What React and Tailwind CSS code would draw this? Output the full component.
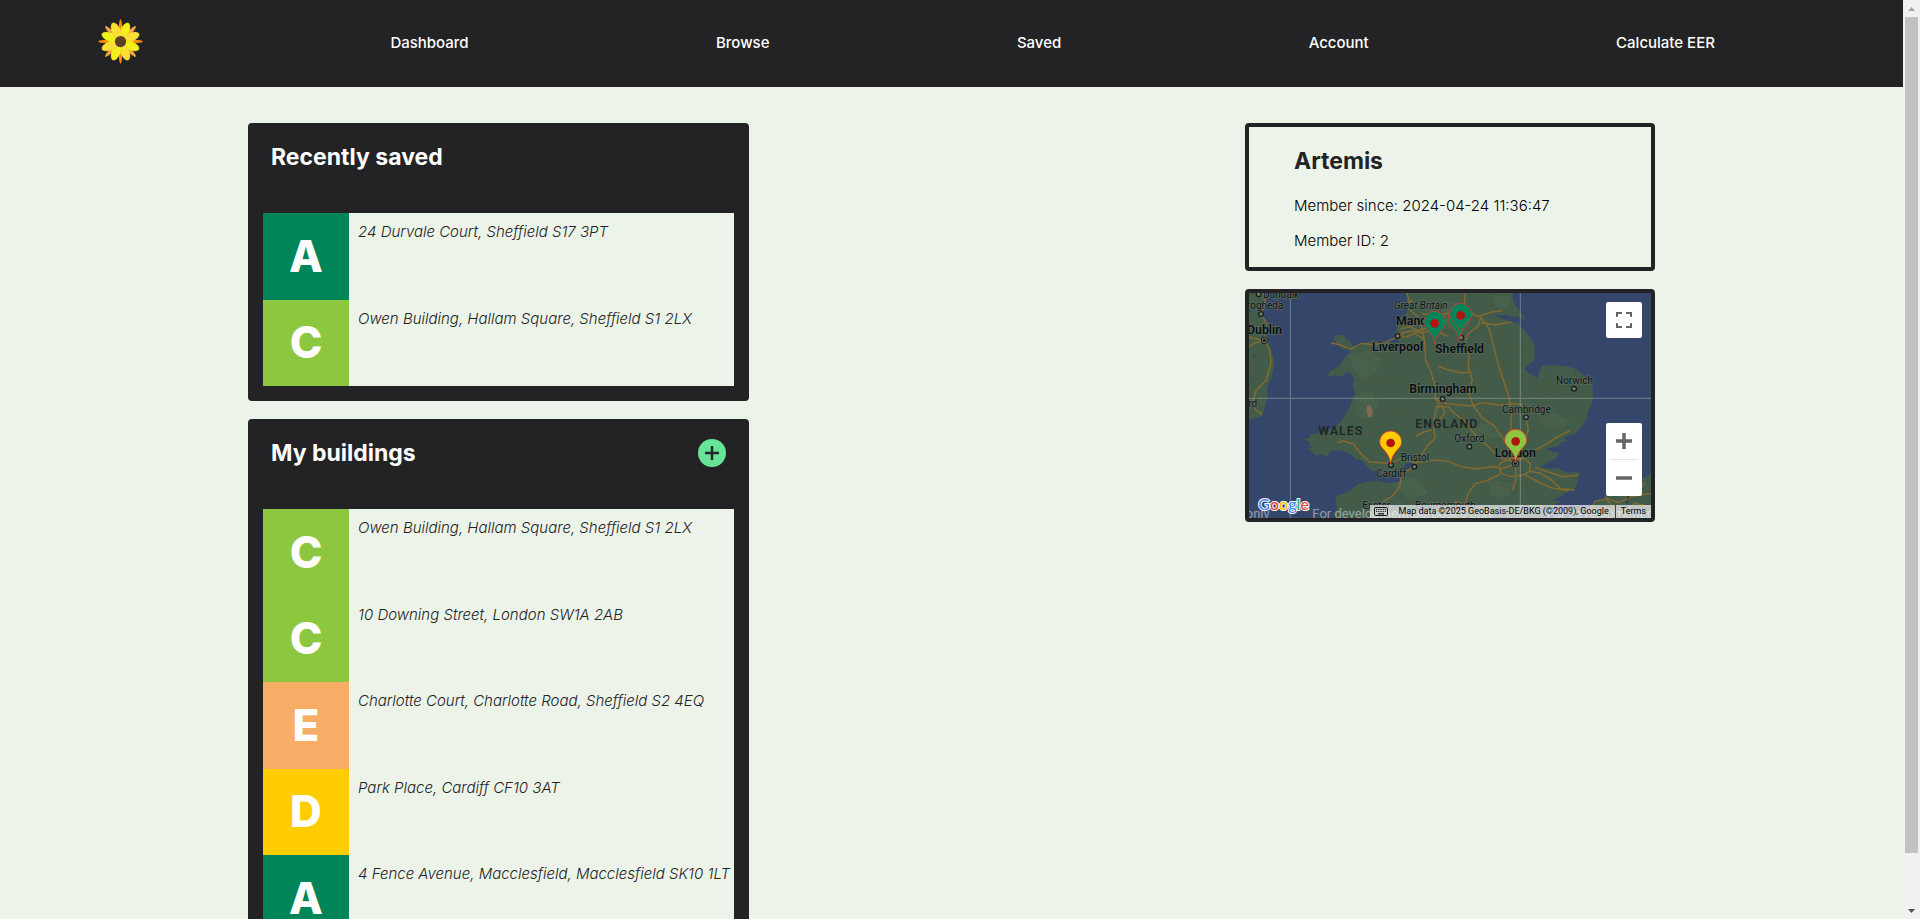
const NAV = ["Dashboard", "Browse", "Saved", "Account", "Calculate EER"];

const SAVED = [
  { rating: "A", address: "24 Durvale Court, Sheffield S17 3PT" },
  { rating: "C", address: "Owen Building, Hallam Square, Sheffield S1 2LX" },
];

const BUILDINGS = [
  { rating: "C", address: "Owen Building, Hallam Square, Sheffield S1 2LX" },
  { rating: "C", address: "10 Downing Street, London SW1A 2AB" },
  { rating: "E", address: "Charlotte Court, Charlotte Road, Sheffield S2 4EQ" },
  { rating: "D", address: "Park Place, Cardiff CF10 3AT" },
  { rating: "A", address: "4 Fence Avenue, Macclesfield, Macclesfield SK10 1LT" },
];

const RATING_COLOURS = {
  A: "bg-[#008558]",
  C: "bg-[#8dc740]",
  D: "bg-[#ffcc00]",
  E: "bg-[#f7ad65]",
};

function Flower() {
  return (
    <svg viewBox="54 37 136 136" className="size-[45px]" aria-hidden="true">
      {[0, 90, 180, 270].map((a) => (
        <ellipse key={a} cx="122" cy="65" rx="5" ry="27" fill="#fb8c00" transform={`rotate(${a} 122 105)`} />
      ))}
      {[45, 135, 225, 315].map((a) => (
        <ellipse key={a} cx="122" cy="67" rx="6" ry="27" fill="#fba540" transform={`rotate(${a} 122 105)`} />
      ))}
      {[22.5, 67.5, 112.5, 157.5, 202.5, 247.5, 292.5, 337.5].map((a, i) => (
        <ellipse
          key={a}
          cx="122"
          cy="73"
          rx="13.5"
          ry="29"
          fill={i % 2 ? "#fbdf35" : "#f0f01c"}
          stroke="#d9bf2a"
          strokeWidth="0.8"
          transform={`rotate(${a} 122 105)`}
        />
      ))}
      <circle cx="122" cy="105" r="17" fill="#5d4023" />
    </svg>
  );
}

function Header() {
  return (
    <header className="bg-[#232325] text-white">
      <nav className="flex h-[87px] items-center justify-between pr-[188px] pl-[98px]" aria-label="Main">
        <a href="#home" aria-label="Home" className="pb-1">
          <Flower />
        </a>
        {NAV.map((item) => (
          <a key={item} href="#" className="pb-px text-[15px] leading-6 font-medium">
            {item}
          </a>
        ))}
      </nav>
    </header>
  );
}

function BuildingPanel({ title, items, action }) {
  return (
    <section className="rounded bg-[#232325] px-[15px] pb-[15px]">
      <div className="flex h-[90px] items-start justify-between px-2 pt-5">
        <h2 className="text-[23px] leading-7 font-bold text-white">{title}</h2>
        {action}
      </div>
      <ul className="bg-[#ecf3e8]">
        {items.map(({ rating, address }) => (
          <li key={address} className="flex odd:h-[87px] even:h-[86px]">
            <span
              className={`flex w-[86px] shrink-0 items-center justify-center pb-0.5 text-[44px] font-extrabold text-white ${RATING_COLOURS[rating]}`}
            >
              {rating}
            </span>
            <p className="pt-2 pl-[9px] text-[15px] leading-[22px] font-light whitespace-nowrap text-[#232325] italic">
              {address}
            </p>
          </li>
        ))}
      </ul>
    </section>
  );
}

function AddButton() {
  return (
    <button type="button" aria-label="Add building" className="flex size-7 items-center justify-center rounded-full bg-[#66e598]">
      <svg viewBox="0 0 14 14" className="size-[14px]" aria-hidden="true">
        <path d="M7 0v14M0 7h14" stroke="#232325" strokeWidth="2.4" />
      </svg>
    </button>
  );
}

function Profile() {
  return (
    <section className="h-[148px] rounded border-4 border-[#232325] px-[45px] pt-[18px]">
      <h2 className="text-[23px] leading-8 font-bold text-[#232325]">Artemis</h2>
      <p className="mt-[18px] text-[15px] leading-[22px] font-light text-black">Member since: 2024-04-24 11:36:47</p>
      <p className="mt-[13px] text-[15px] leading-[22px] font-light text-black">Member ID: 2</p>
    </section>
  );
}

function Pin({ x, y, fill }) {
  return (
    <g transform={`translate(${x} ${y})`}>
      <path
        d="M0 0C-3 -22 -9 -30 -19 -42C-29 -53 -33 -58 -33 -67A33 33 0 0 1 33 -67C33 -58 29 -53 19 -42C9 -30 3 -22 0 0Z"
        fill={fill}
        stroke="#e03030"
        strokeWidth="2.5"
      />
      <circle cy="-64" r="13" fill="#b31412" />
    </g>
  );
}

const TOWNS = [
  [71, 43], [78, 102], [488, 168], [623, 357], [538, 560], [468, 555], [679, 173], [703, 500], [873, 412], [1017, 326],
];

const MAJOR_LABELS = [
  [36, 161, "Dublin"],
  [483, 135, "Manch"],
  [411, 213, "Liverpool"],
  [600, 219, "Sheffield"],
  [523, 340, "Birmingham"],
  [779, 531, "London"],
];

const MINOR_LABELS = [
  [84, 53, "Dundalk"],
  [16, 88, "Drogheda"],
  [497, 544, "Bristol"],
  [423, 590, "Cardiff"],
  [658, 487, "Oxford"],
  [801, 398, "Cambridge"],
  [963, 311, "Norwich"],
  [382, 686, "Exeter"],
  [540, 686, "Bournemouth"],
  [-45, 382, "Wexford"],
];

const GB =
  "M512 39L520 52L512 66L522 82L512 102L496 112L484 130L486 150L478 166L492 186L476 190L460 184L440 190L412 180L392 190L366 200L352 196L346 184L336 180L328 166L304 166L296 172L304 190L320 206L338 206L350 212L330 232L316 254L300 266L286 272L274 292L300 286L322 290L334 276L348 280L358 300L354 316L360 340L350 364L338 396L318 424L296 442L268 456L244 458L226 464L224 474L204 476L226 486L222 498L238 500L216 508L232 516L240 528L262 522L276 530L286 514L306 510L328 514L350 524L362 538L382 540L398 560L412 574L434 572L440 584L466 580L486 572L510 556L528 540L536 552L516 570L496 588L490 608L462 610L428 602L388 606L366 614L342 634L306 648L300 664L306 684L296 700L300 714L930 714L944 690L966 668L980 662L950 662L980 648L1000 634L1024 622L1030 596L1034 574L1006 578L984 574L968 562L944 566L914 562L942 546L962 534L974 520L948 514L936 506L970 498L978 486L1000 484L984 474L1004 466L1020 464L1044 434L1054 420L1058 398L1070 372L1074 350L1072 312L1050 288L1020 266L994 258L950 256L920 258L914 274L906 294L886 282L868 268L880 254L896 242L900 218L898 196L886 172L866 148L846 128L824 126L806 116L778 106L818 104L836 112L848 108L872 122L858 98L842 76L834 62L832 39Z";

const MINOR_ROADS =
  "M346 230L372 222L400 236L436 226L468 242L500 230L540 240L572 222M360 300L392 290L420 310L452 296L486 318L520 306L556 322L590 306M404 184L412 226L400 262L416 300L398 348L416 392L404 440L420 486L410 540M470 196L462 240L478 280L466 330L482 372L470 420L488 460L478 530M344 384L380 374L420 398L462 388L500 404L540 392L580 400M306 452L350 446L392 462L440 448L490 470L536 458L580 470M520 200L534 250L522 300L540 350M560 420L548 470L568 510L600 520L640 506L668 520M610 250L650 262L690 246L720 262L760 250L800 266L850 252M612 200L630 230L618 270L640 310L626 350M720 110L740 150L728 200L752 240L740 300L762 340L750 392L770 430M760 70L800 90L830 120M740 190L790 180L840 200L890 190M800 150L812 200L804 250L822 300L812 352L836 400M840 280L870 290L900 320L940 310L980 322L1030 300M850 350L900 346L944 362L990 340L1060 352M900 300L912 350L900 400L922 440L912 480M960 260L970 310L958 360L976 410L960 450M1020 270L1030 330L1016 390L1030 430M880 430L920 420L960 440L1010 424M640 400L680 410L720 398L760 412L800 400M640 450L690 440L740 460L790 450M690 520L700 570L680 620L700 680M620 560L610 610L630 660L620 700M560 600L600 610L650 596L700 616L760 604L810 622L860 608L920 620L970 606M540 620L530 660L550 700M740 560L760 600L750 650L770 700M800 600L812 650L800 700M880 590L872 640L890 680M330 660L370 650L410 664L460 640L500 652M360 620L390 660L380 700M430 610L440 650L428 700M580 50L600 80L640 70L670 90L720 80M520 60L560 100L620 110L660 130L700 140M250 472L290 480L330 476L370 500L410 508L450 500M42 110L70 130L60 160M42 240L80 226L104 240M42 300L74 296M56 200L64 250L54 300";

const ROADS =
  "M84 39L92 70L78 104L96 130L90 160L88 182L104 210L108 250L94 300L62 334L54 364L62 390L82 404M42 172L88 182L60 188L42 200M288 188L320 196L346 208L380 190L412 194L444 190L476 176L500 160L530 152L560 158L600 150L640 170M496 146L524 140L548 152L576 144M484 160L510 172L540 160L568 178L572 240L586 270L598 310L600 350L612 374L600 400L596 440L600 474L580 494L548 540L538 560L500 584L494 620L470 650L444 664M530 60L524 90L548 108L560 140L568 180M560 100L600 110L650 96L690 100M516 39L524 70M690 39L688 76L706 100L738 112L730 138L700 160L690 190L702 226L700 262L712 300L700 340L716 378L740 412L776 436L800 470L824 500L842 530M730 110L770 96L802 92M738 128L780 134L830 126M738 112L764 150L776 200L792 260L808 310L822 350L830 400L826 460L830 500L842 520M608 258L640 270L680 278L712 276M543 468L566 456L590 450M600 356L630 370L668 374L712 378L740 368L800 376L830 372L860 372M600 380L640 380L660 402L690 424L724 470L760 500L790 530L820 540L842 548M618 372L630 400L612 420M306 488L324 482L356 492L376 520L404 546L440 548L468 550L496 536L540 548L600 540L640 544L680 560L720 566L780 560L800 566L842 552M840 540L860 500L880 450L873 412L860 372M842 548L880 520L910 506L938 490L968 470L1006 452M790 560L800 546L830 534L868 536L886 552L884 574L862 586L826 590L800 580L790 560M884 574L916 580L950 600L976 626L1020 630M870 584L910 606L950 624L1000 632M900 562L940 576L984 590L1030 586M842 560L842 600L832 632M800 580L760 600L720 612L700 640L690 672L660 664M640 690L664 664";

function MapArt() {
  return (
    <svg
      viewBox="42 39 1206 675"
      className="block w-full"
      role="img"
      aria-label="Map of England and Wales with building locations"
      fontFamily="Roboto, 'Noto Sans', sans-serif"
    >
      <rect x="42" y="39" width="1206" height="675" fill="#34466a" />
      <g fill="#435c4a">
        <path d="M42 39H82L96 52L90 74L76 86L80 104L96 128L78 146L96 170L106 200L118 250L110 290L96 324L98 356L90 380L80 410L60 414L42 418Z" />
        <path d={GB} />
        <path d="M1048 714L1062 690L1076 672L1112 650L1148 630L1200 606L1248 582V714Z" />
      </g>
      <g fill="#4a6650" opacity="0.55">
        <path d="M340 226L400 210L440 240L420 280L380 300L360 270ZM360 350L410 330L430 380L400 420L366 410ZM470 610L540 590L580 640L520 660ZM620 60L670 70L680 130L640 150L620 110ZM900 420L960 400L1010 430L960 450ZM760 600L830 610L820 650L770 650ZM680 440L760 430L800 470L720 480ZM770 45L826 50L820 90L780 80Z" />
      </g>
      <path d={MINOR_ROADS} fill="none" stroke="#4f5337" strokeWidth="2.5" opacity="0.7" />
      <path d={ROADS} fill="none" stroke="#84692f" strokeWidth="4.5" strokeLinejoin="round" />
      <path d="M1060 700L1080 664L1120 656L1150 668L1190 650L1248 640M1070 690L1110 680L1160 700L1200 670L1248 680M1110 650L1140 690M1190 650L1230 610" fill="none" stroke="#84692f" strokeWidth="4" />
      <path d="M1176 620L1180 650L1174 680L1182 714" fill="none" stroke="#22252a" strokeWidth="3" strokeDasharray="9 5" />
      <path d="M396 378L408 376L414 396L410 412L400 410L394 394Z" fill="#7d6a55" />
      <path d="M52 232L62 224M848 62L858 76" stroke="#34466a" strokeWidth="4" />
      <path d="M166 39V714M856 39V714M42 355H1248" stroke="#a9b2ae" strokeWidth="3" opacity="0.5" />

      {TOWNS.map(([x, y]) => (
        <circle key={`${x}-${y}`} cx={x} cy={y} r="7" fill="#6f7b72" stroke="#15181a" strokeWidth="3.5" />
      ))}
      {[[88, 181], [841, 550]].map(([x, y]) => (
        <g key={x}>
          <circle cx={x} cy={y} r="9.5" fill="#6f7b72" stroke="#15181a" strokeWidth="3" />
          <circle cx={x} cy={y} r="5" fill="#15181a" />
        </g>
      ))}

      <g stroke="#5b6c62" strokeWidth="4" paintOrder="stroke" strokeLinejoin="round">
        <g fill="#0b0d0e" fontSize="37" fontWeight="600">
          {MAJOR_LABELS.map(([x, y, name]) => (
            <text key={name} x={x} y={y}>{name}</text>
          ))}
        </g>
        <g fill="#0f1213" fontSize="30">
          {MINOR_LABELS.map(([x, y, name]) => (
            <text key={name} x={x} y={y}>{name}</text>
          ))}
          <text x="477" y="88" fontStyle="italic">Great Britain</text>
        </g>
      </g>
      <g fill="#202425" fontSize="37" fontWeight="600" letterSpacing="3">
        <text x="250" y="464">WALES</text>
        <text x="541" y="445">ENGLAND</text>
      </g>

      <Pin x={599} y={194} fill="#008558" />
      <Pin x={672} y={184} fill="#008558" />
      <Pin x={677} y={170} fill="#008558" />
      <Pin x={467} y={553} fill="#ffcc00" />
      <Pin x={842} y={548} fill="#8dc740" />

      <g fill="#ffffff" fontSize="39" opacity="0.45">
        <text x="104" y="713" textAnchor="end">only</text>
        <text x="232" y="713">For development purposes only</text>
        <text x="935" y="713">For development purposes only</text>
      </g>
      <text x="70" y="691" fontSize="48" fontWeight="500" fontFamily="Lato, sans-serif" stroke="#ffffff" strokeWidth="6" paintOrder="stroke">
        <tspan fill="#4285f4">G</tspan>
        <tspan fill="#ea4335">o</tspan>
        <tspan fill="#fbbc05">o</tspan>
        <tspan fill="#4285f4">g</tspan>
        <tspan fill="#34a853">l</tspan>
        <tspan fill="#ea4335">e</tspan>
      </text>
    </svg>
  );
}

function KeyboardIcon() {
  return (
    <svg viewBox="0 0 14 9" className="h-[9px] w-[14px]" aria-hidden="true">
      <rect x="0.5" y="0.5" width="13" height="8" rx="1" fill="none" stroke="#111" />
      <path d="M2 2.5h10M2 4.5h10" stroke="#111" strokeDasharray="1.2 1" />
      <path d="M4 6.8h6" stroke="#111" strokeWidth="1.2" />
    </svg>
  );
}

function MapPanel() {
  return (
    <section className="relative overflow-hidden rounded border-4 border-[#232325]">
      <MapArt />
      <button type="button" aria-label="Toggle fullscreen view" className="absolute top-[9px] right-[9px] flex size-9 items-center justify-center rounded-[2px] bg-white">
        <svg viewBox="0 0 16 16" className="size-4" aria-hidden="true">
          <path d="M1 5V1H6M10 1H15V5M15 11V15H10M6 15H1V11" fill="none" stroke="#666" strokeWidth="2" />
        </svg>
      </button>
      <div className="absolute right-[9px] bottom-[22px] flex h-[73px] w-9 flex-col rounded-[2px] bg-white">
        <button type="button" aria-label="Zoom in" className="flex flex-1 items-center justify-center">
          <svg viewBox="0 0 16 16" className="size-4" aria-hidden="true">
            <path d="M8 0V16M0 8H16" stroke="#666" strokeWidth="3.5" />
          </svg>
        </button>
        <div className="mx-1 h-px bg-[#e6e6e6]" />
        <button type="button" aria-label="Zoom out" className="flex flex-1 items-center justify-center">
          <svg viewBox="0 0 16 16" className="size-4" aria-hidden="true">
            <path d="M0 8H16" stroke="#666" strokeWidth="3.5" />
          </svg>
        </button>
      </div>
      <div className="absolute right-0 bottom-0 flex h-[13px] items-center bg-[#f5f5f5]/70 font-[Roboto,sans-serif] text-[9px] leading-[13px] whitespace-nowrap text-black">
        <button type="button" aria-label="Keyboard shortcuts" className="px-1">
          <KeyboardIcon />
        </button>
        <span className="pr-[6px] pl-[6px]">Map data ©2025 GeoBasis-DE/BKG (©2009), Google</span>
        <a href="#terms" className="border-l border-[#444] px-[5px]">
          Terms
        </a>
      </div>
    </section>
  );
}

function ScrollTrack() {
  return (
    <div className="flex w-[17px] shrink-0 flex-col items-center bg-[#f1f1f1]" aria-hidden="true">
      <div className="flex h-[17px] items-center">
        <svg viewBox="0 0 7 4" className="h-1 w-[7px]">
          <path d="M3.5 0L7 4H0Z" fill="#a3a3a3" />
        </svg>
      </div>
      <div className="w-[13px] grow-[836] bg-[#c1c1c1]" />
      <div className="grow-[49]" />
      <div className="flex h-[17px] items-center">
        <svg viewBox="0 0 7 4" className="h-1 w-[7px]">
          <path d="M3.5 4L7 0H0Z" fill="#505050" />
        </svg>
      </div>
    </div>
  );
}

export default function App() {
  return (
    <div className="flex h-screen overflow-hidden bg-[#ecf3e8] font-[Inter,'Open_Sans',sans-serif]">
      <div className="min-w-0 flex-1 overflow-hidden">
        <Header />
        <main className="grid grid-cols-[501fr_496fr_410fr] items-start px-[248px] pt-9">
          <div className="flex flex-col gap-[18px]">
            <BuildingPanel title="Recently saved" items={SAVED} />
            <BuildingPanel title="My buildings" items={BUILDINGS} action={<AddButton />} />
          </div>
          <div />
          <div className="flex flex-col gap-[18px]">
            <Profile />
            <MapPanel />
          </div>
        </main>
      </div>
      <ScrollTrack />
    </div>
  );
}
